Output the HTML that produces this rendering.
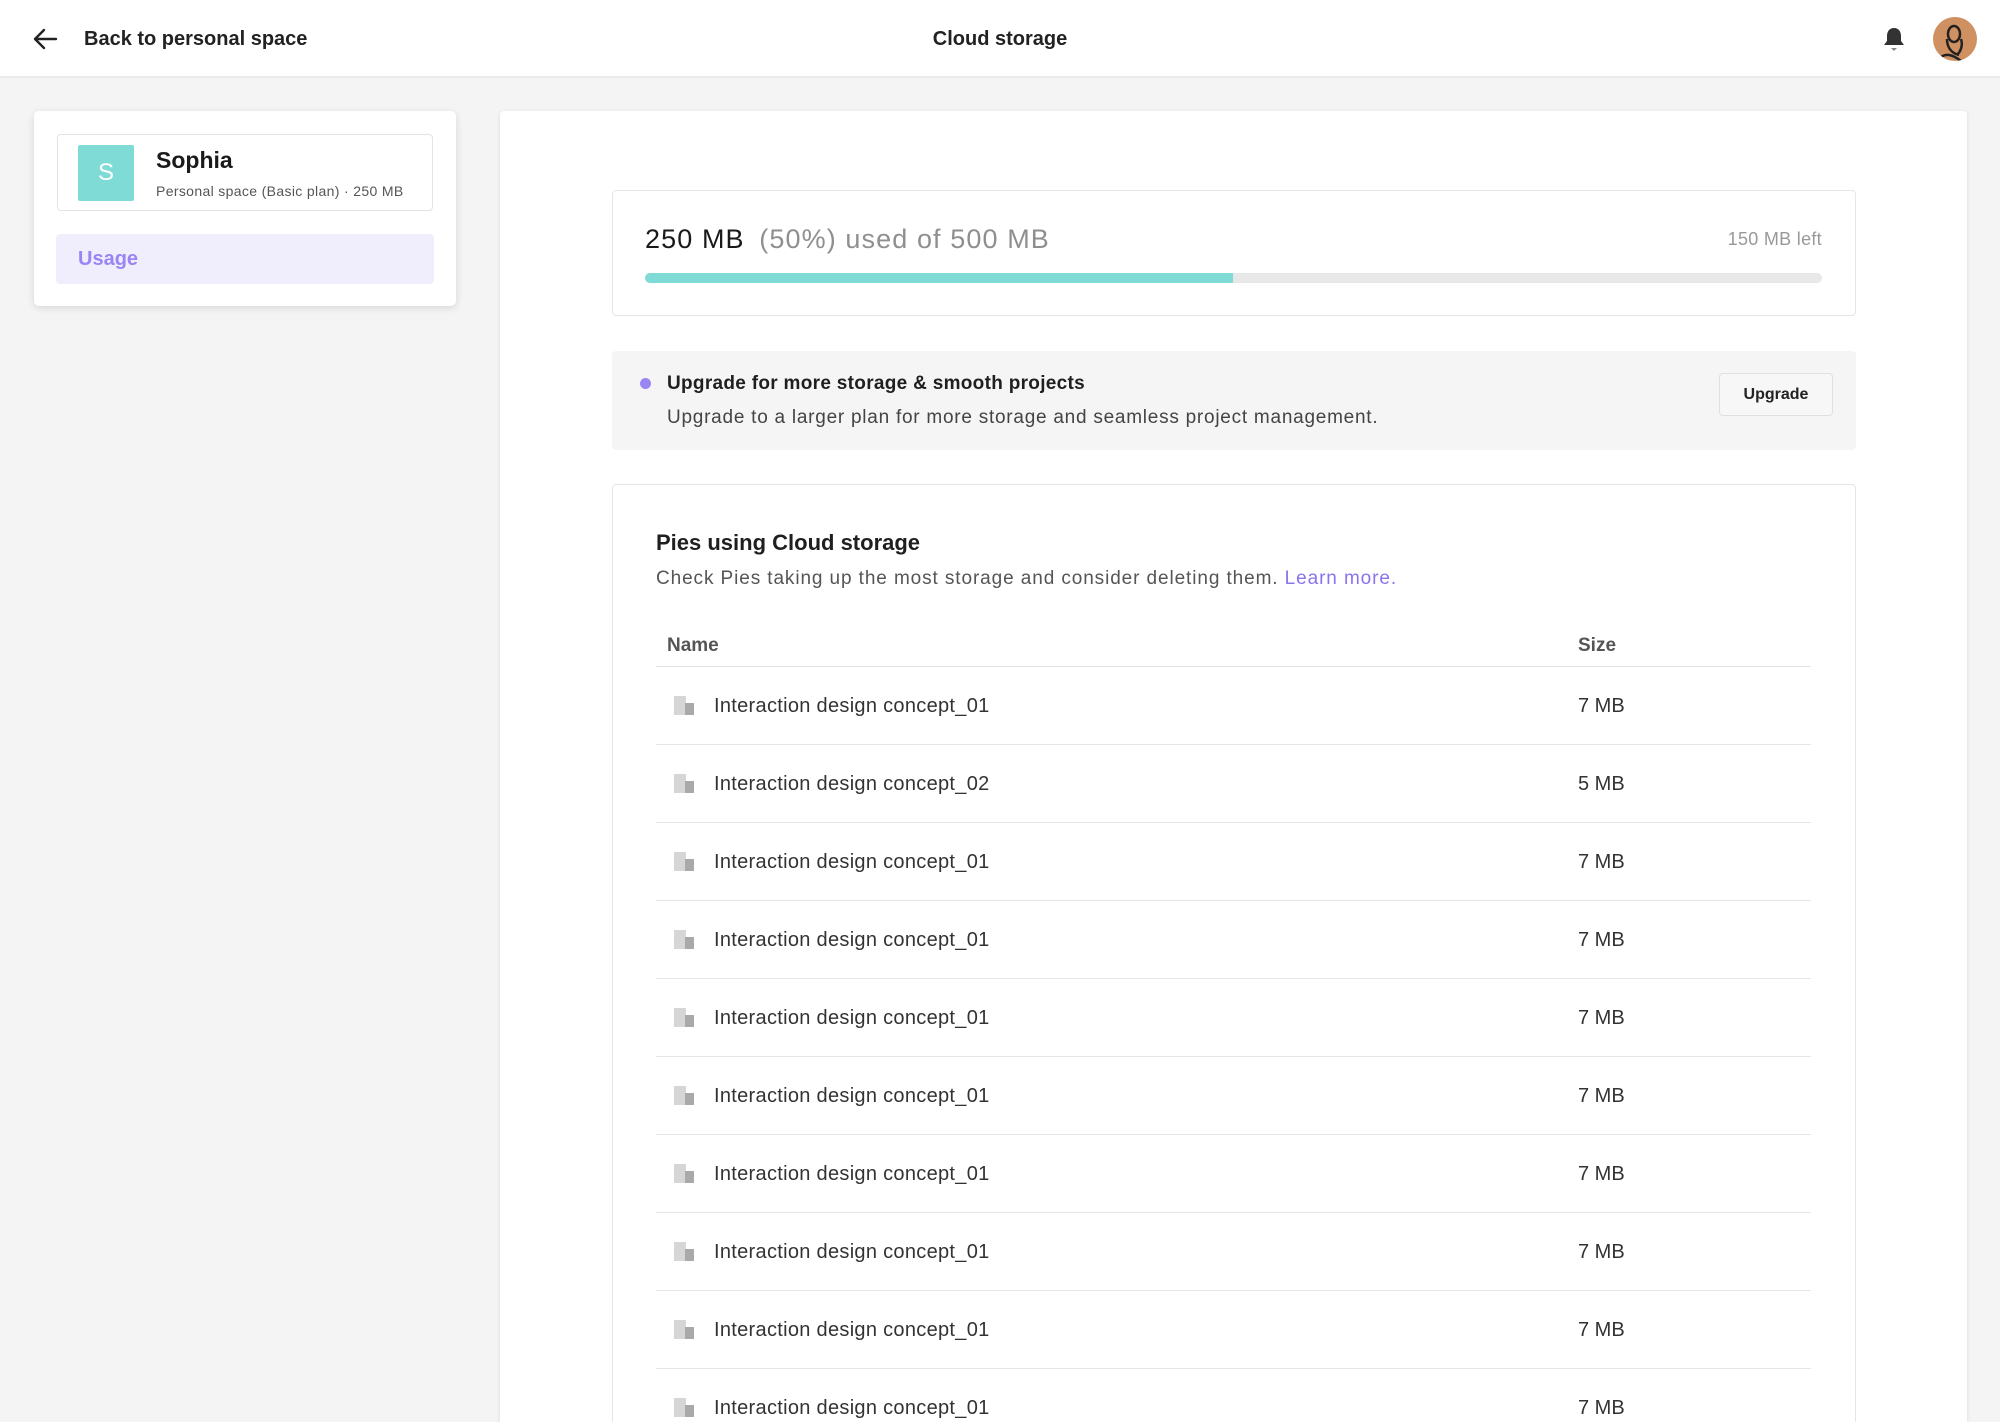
<!DOCTYPE html>
<html><head><meta charset="utf-8"><style>
*{box-sizing:border-box;margin:0;padding:0}
html,body{width:2000px;height:1422px;overflow:hidden}
body{background:#f4f4f4;font-family:"Liberation Sans",sans-serif;color:#1f1f1f;position:relative}
.abs{position:absolute}
.hdr{left:0;top:0;width:2000px;height:78px;background:#fff;border-bottom:2px solid #ebebeb}
.t{white-space:nowrap;line-height:1}
.row{position:absolute;left:656px;width:1155px;height:78px;border-bottom:1px solid #e6e6e6}
.row .ic{position:absolute;left:18px;top:29px;width:20px;height:19px}
.row .nm{position:absolute;left:58px;top:29px;font-size:20px;color:#333;letter-spacing:0.3px}
.row .sz{position:absolute;left:922px;top:29px;font-size:20px;color:#333}
</style></head><body>
<div class="abs hdr"></div>
<svg class="abs" style="left:32px;top:27px" width="26" height="24" viewBox="0 0 26 24"><path d="M24 12H3M12 3L3 12l9 9" fill="none" stroke="#222" stroke-width="2.4" stroke-linecap="round" stroke-linejoin="round"/></svg>
<div class="abs t" style="left:84px;top:29px;font-size:20px;font-weight:bold;color:#222">Back to personal space</div>
<div class="abs t" style="left:0;width:2000px;text-align:center;top:29px;font-size:20px;font-weight:bold;color:#222">Cloud storage</div>
<svg class="abs" style="left:1882px;top:26px" width="24" height="26" viewBox="0 0 24 26"><path d="M12 2c-5 0-7 4-7 8v5l-3 4h20l-3-4v-5c0-4-2-8-7-8z" fill="#333"/><path d="M9 22h6l-3 3z" fill="#888"/></svg>
<div class="abs" style="left:1933px;top:17px;width:44px;height:44px;border-radius:50%;background:#cf9161;overflow:hidden"><svg width="44" height="44" viewBox="0 0 44 44"><ellipse cx="21" cy="17" rx="6" ry="8" fill="none" stroke="#222" stroke-width="2.5"/><path d="M14 22c0 8 4 14 12 16M28 22c2 6 0 12-4 16M8 40c6-4 12-2 20 4" fill="none" stroke="#222" stroke-width="2.5"/></svg></div>

<div class="abs" style="left:34px;top:111px;width:422px;height:195px;background:#fff;border-radius:5px;box-shadow:0 2px 8px rgba(0,0,0,.12)"></div>
<div class="abs" style="left:57px;top:134px;width:376px;height:77px;border:1px solid #e3e3e3;border-radius:4px"></div>
<div class="abs" style="left:78px;top:145px;width:56px;height:56px;background:#7fdbd6;border-radius:2px;color:#fff;font-size:24px;text-align:center;line-height:56px">S</div>
<div class="abs t" style="left:156px;top:149px;font-size:23px;font-weight:bold;color:#1a1a1a">Sophia</div>
<div class="abs t" style="left:156px;top:184px;font-size:14px;color:#555;letter-spacing:0.35px">Personal space (Basic plan) · 250 MB</div>
<div class="abs" style="left:56px;top:234px;width:378px;height:50px;background:#f0edfd;border-radius:4px"></div>
<div class="abs t" style="left:78px;top:249px;font-size:20px;font-weight:bold;color:#9a85f2">Usage</div>

<div class="abs" style="left:500px;top:111px;width:1467px;height:1311px;background:#fff;border-radius:4px 4px 0 0;box-shadow:0 1px 4px rgba(0,0,0,.1);overflow:hidden">
<div class="abs" style="left:112px;top:79px;width:1244px;height:126px;border:1px solid #e6e6e6;border-radius:4px"></div>
<div class="abs t" style="left:145px;top:115px;font-size:27px;color:#1a1a1a;letter-spacing:1.1px">250 MB <span style="color:#8f8f8f;margin-left:6px">(50%) used of 500 MB</span></div>
<div class="abs t" style="left:1100px;width:222px;text-align:right;top:119px;font-size:18px;color:#999;letter-spacing:0.3px">150 MB left</div>
<div class="abs" style="left:145px;top:162px;width:1177px;height:10px;border-radius:5px;background:#e8e8e8;overflow:hidden"><div style="width:588px;height:10px;background:#7fdbd6"></div></div>

<div class="abs" style="left:112px;top:240px;width:1244px;height:99px;background:#f5f5f5;border-radius:4px"></div>
<div class="abs" style="left:140px;top:267px;width:11px;height:11px;border-radius:50%;background:#9a85f2"></div>
<div class="abs t" style="left:167px;top:263px;font-size:19px;font-weight:bold;color:#1f1f1f;letter-spacing:0.3px">Upgrade for more storage &amp; smooth projects</div>
<div class="abs t" style="left:167px;top:297px;font-size:19px;color:#444;letter-spacing:0.75px">Upgrade to a larger plan for more storage and seamless project management.</div>
<div class="abs" style="left:1219px;top:262px;width:114px;height:43px;border:1px solid #e0e0e0;border-radius:4px;background:#f7f7f7;font-size:16px;font-weight:bold;text-align:center;line-height:41px;color:#222">Upgrade</div>

<div class="abs" style="left:112px;top:373px;width:1244px;height:1000px;border:1px solid #e6e6e6;border-radius:4px"></div>
<div class="abs t" style="left:156px;top:421px;font-size:22px;font-weight:bold;color:#1f1f1f">Pies using Cloud storage</div>
<div class="abs t" style="left:156px;top:458px;font-size:19px;color:#555;letter-spacing:0.9px">Check Pies taking up the most storage and consider deleting them. <span style="color:#8c73ee">Learn more.</span></div>
<div class="abs t" style="left:167px;top:525px;font-size:19px;font-weight:bold;color:#555">Name</div>
<div class="abs t" style="left:1078px;top:525px;font-size:19px;font-weight:bold;color:#555">Size</div>
<div class="abs" style="left:156px;top:555px;width:1155px;height:1px;background:#e3e3e3"></div>
</div>

<div class="row" style="top:667px"><svg class="ic" viewBox="0 0 20 19"><path d="M0 0h12v7h-1v12H0z" fill="#d6d6d6"/><rect x="11" y="7" width="9" height="12" fill="#a9a9a9"/></svg><div class="nm t">Interaction design concept_01</div><div class="sz t">7 MB</div></div>
<div class="row" style="top:745px"><svg class="ic" viewBox="0 0 20 19"><path d="M0 0h12v7h-1v12H0z" fill="#d6d6d6"/><rect x="11" y="7" width="9" height="12" fill="#a9a9a9"/></svg><div class="nm t">Interaction design concept_02</div><div class="sz t">5 MB</div></div>
<div class="row" style="top:823px"><svg class="ic" viewBox="0 0 20 19"><path d="M0 0h12v7h-1v12H0z" fill="#d6d6d6"/><rect x="11" y="7" width="9" height="12" fill="#a9a9a9"/></svg><div class="nm t">Interaction design concept_01</div><div class="sz t">7 MB</div></div>
<div class="row" style="top:901px"><svg class="ic" viewBox="0 0 20 19"><path d="M0 0h12v7h-1v12H0z" fill="#d6d6d6"/><rect x="11" y="7" width="9" height="12" fill="#a9a9a9"/></svg><div class="nm t">Interaction design concept_01</div><div class="sz t">7 MB</div></div>
<div class="row" style="top:979px"><svg class="ic" viewBox="0 0 20 19"><path d="M0 0h12v7h-1v12H0z" fill="#d6d6d6"/><rect x="11" y="7" width="9" height="12" fill="#a9a9a9"/></svg><div class="nm t">Interaction design concept_01</div><div class="sz t">7 MB</div></div>
<div class="row" style="top:1057px"><svg class="ic" viewBox="0 0 20 19"><path d="M0 0h12v7h-1v12H0z" fill="#d6d6d6"/><rect x="11" y="7" width="9" height="12" fill="#a9a9a9"/></svg><div class="nm t">Interaction design concept_01</div><div class="sz t">7 MB</div></div>
<div class="row" style="top:1135px"><svg class="ic" viewBox="0 0 20 19"><path d="M0 0h12v7h-1v12H0z" fill="#d6d6d6"/><rect x="11" y="7" width="9" height="12" fill="#a9a9a9"/></svg><div class="nm t">Interaction design concept_01</div><div class="sz t">7 MB</div></div>
<div class="row" style="top:1213px"><svg class="ic" viewBox="0 0 20 19"><path d="M0 0h12v7h-1v12H0z" fill="#d6d6d6"/><rect x="11" y="7" width="9" height="12" fill="#a9a9a9"/></svg><div class="nm t">Interaction design concept_01</div><div class="sz t">7 MB</div></div>
<div class="row" style="top:1291px"><svg class="ic" viewBox="0 0 20 19"><path d="M0 0h12v7h-1v12H0z" fill="#d6d6d6"/><rect x="11" y="7" width="9" height="12" fill="#a9a9a9"/></svg><div class="nm t">Interaction design concept_01</div><div class="sz t">7 MB</div></div>
<div class="row" style="top:1369px;height:53px;border-bottom:none"><svg class="ic" viewBox="0 0 20 19"><path d="M0 0h12v7h-1v12H0z" fill="#d6d6d6"/><rect x="11" y="7" width="9" height="12" fill="#a9a9a9"/></svg><div class="nm t">Interaction design concept_01</div><div class="sz t">7 MB</div></div>
</body></html>
